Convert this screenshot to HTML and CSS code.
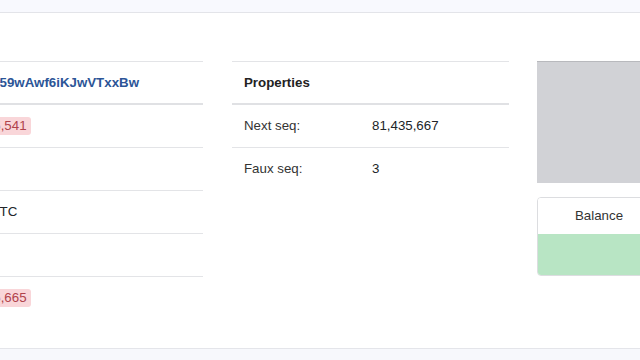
FILE: index.html
```html
<!DOCTYPE html>
<html lang="en">
<head>
  <meta charset="UTF-8" />
  <meta name="viewport" content="width=device-width, initial-scale=1.0"/>
  <title>Account</title>
  <link rel="stylesheet" href="styles.css">
</head>
<body>
  <div class="topbar"></div>

  <div class="card">
    <div class="row">
      <div class="col col-main">
        <table class="table info">
          <thead>
            <tr>
              <th class="label">Account</th>
              <th><a class="addr" href="#">rNk9Ep59wAwf6iKJwVTxxBw</a></th>
            </tr>
          </thead>
          <tbody>
            <tr>
              <td class="label">Created in</td>
              <td><span class="badge">81,435,541</span></td>
            </tr>
            <tr>
              <td class="label">Owner</td>
              <td>—</td>
            </tr>
            <tr>
              <td class="label">Updated</td>
              <td>00:00 UTC</td>
            </tr>
            <tr>
              <td class="label">Flags</td>
              <td>0</td>
            </tr>
            <tr>
              <td class="label">Last ledger</td>
              <td><span class="badge">81,435,665</span></td>
            </tr>
          </tbody>
        </table>
      </div>

      <div class="col col-props">
        <table class="table props">
          <colgroup>
            <col class="key-col">
            <col>
          </colgroup>
          <thead>
            <tr>
              <th colspan="2">Properties</th>
            </tr>
          </thead>
          <tbody>
            <tr>
              <td class="key">Next seq:</td>
              <td>81,435,667</td>
            </tr>
            <tr>
              <td class="key">Faux seq:</td>
              <td>3</td>
            </tr>
          </tbody>
        </table>
      </div>

      <div class="col col-side">
        <div class="avatar"></div>
        <div class="balance">
          <div class="balance-head">Balance</div>
          <div class="balance-body"></div>
        </div>
      </div>
    </div>
  </div>
</body>
</html>
```

FILE: styles.css
```css
html, body {
  overflow: hidden;
}

body {
  margin: 0;
  font-family: "Liberation Sans", Arial, sans-serif;
  font-size: 13.3px;
  color: #212529;
  background: #f7f8fc;
}

.topbar {
  height: 12px;
  background: #f8f9fe;
  border-bottom: 1px solid #e3e4e9;
}

.card {
  height: 336px;
  background: #ffffff;
  border-bottom: 1px solid #e4e5ea;
  box-shadow: 0 1px 2px rgba(0,0,0,0.04);
  padding-top: 48px;
  box-sizing: border-box;
}

.row {
  display: flex;
  align-items: flex-start;
  margin-left: -200px;
}

.col-main {
  width: 403px;
  flex: none;
}

.col-props {
  width: 277px;
  flex: none;
  margin-left: 29px;
}

.col-side {
  width: 124px;
  flex: none;
  margin-left: 28px;
}

/* tables */
.table {
  width: 100%;
  border-collapse: collapse;
  table-layout: fixed;
}

.table th,
.table td {
  padding: 12px 12px;
  line-height: 18px;
  text-align: left;
  vertical-align: middle;
  border-top: 1px solid #e3e4e7;
  white-space: nowrap;
}

.table thead th {
  padding-bottom: 11px;
  border-bottom: 2px solid #e0e1e4;
  font-weight: bold;
  color: #222;
}

.table tbody tr:first-child td {
  border-top: none;
}

.info .label {
  width: 117px;
  color: #333;
}

.props .key-col {
  width: 128px;
}

.props .key {
  color: #333;
}

.addr {
  color: #2c5597;
  text-decoration: none;
}

.badge {
  display: inline-block;
  padding: 0 4px 0 7px;
  line-height: 18px;
  border-radius: 3px;
  background: #f9d6d9;
  color: #b0424b;
}

/* side */
.avatar {
  height: 121px;
  background: #d1d2d6;
  border-top: 1px solid #b8b9bd;
}

.balance {
  margin-top: 14px;
  border: 1px solid #dcdde0;
  border-radius: 4px;
  overflow: hidden;
}

.balance-head {
  height: 36px;
  line-height: 36px;
  text-align: center;
  color: #333;
  background: #fff;
}

.balance-body {
  height: 41px;
  background: #b8e5c4;
}
```
